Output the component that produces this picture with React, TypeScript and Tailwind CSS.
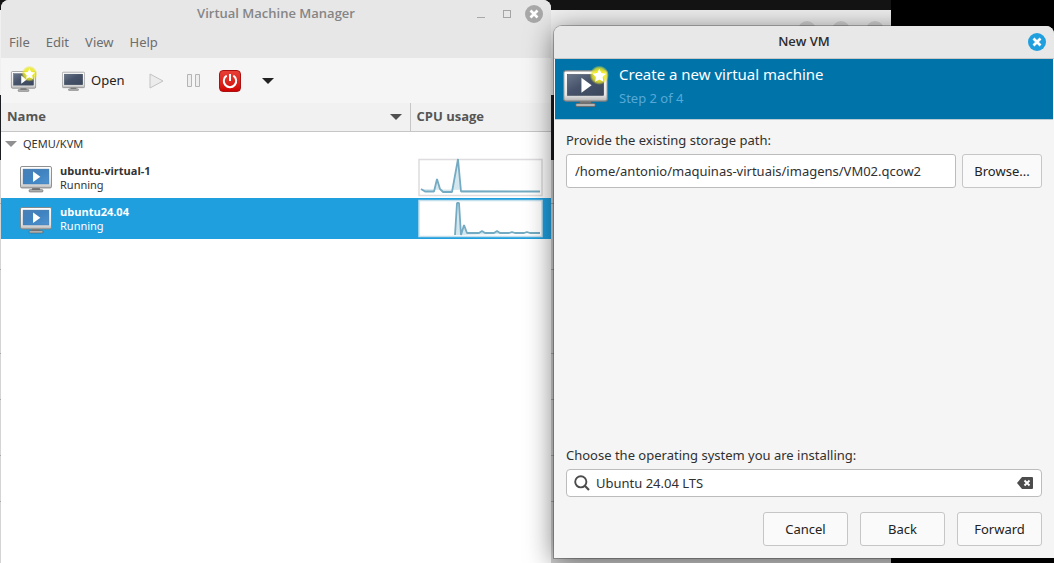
import React from "react";

function Monitor({ className, screen, play, star }: { className: string; screen: "blue" | "dark"; play?: boolean; star?: "small" | "large" }) {
  const id = React.useId();
  return (
    <svg className={className} viewBox="0 0 44 40" aria-hidden="true">
      <defs>
        <linearGradient id={id + "f"} x1="0" y1="0" x2="0" y2="1">
          <stop offset="0" stopColor="#fff" />
          <stop offset="0.8" stopColor="#e4e4e4" />
          <stop offset="1" stopColor="#b4b4b4" />
        </linearGradient>
        <linearGradient id={id + "s"} x1="0" y1="0" x2="1" y2="1">
          <stop offset="0" stopColor={screen === "blue" ? "#4a7fb5" : "#69768a"} />
          <stop offset="0.45" stopColor={screen === "blue" ? "#3f82c0" : "#46536a"} />
          <stop offset="1" stopColor={screen === "blue" ? "#4e92cf" : "#3b475b"} />
        </linearGradient>
        <radialGradient id={id + "g"}>
          <stop offset="0.4" stopColor="#f2ee1c" />
          <stop offset="0.75" stopColor="#e8e62a" stopOpacity="0.75" />
          <stop offset="1" stopColor="#e8e62a" stopOpacity="0" />
        </radialGradient>
      </defs>
      <path d="M17 33h10l1 4H16z" fill="#777" />
      <rect x="12.5" y="36" width="19" height="3.2" rx="1.2" fill="#b5b5b5" stroke="#5b5b5b" strokeWidth="0.8" />
      <rect x="0.7" y="4.2" width="42.6" height="29.5" rx="2" fill={"url(#" + id + "f)"} stroke="#808080" strokeWidth="1.2" />
      <rect x="4.200" y="7.700" width="35.600" height="20.600" fill={"url(#" + id + "s)"} stroke={screen === "blue" ? "#3c6f9f" : "#354052"} strokeWidth="0.5" />
      {play && <path d="M18 11v14.500l10-7.250z" fill="#fff" />}
      {star && (
        <g transform={star === "small" ? "translate(-20 -4.500) scale(1.480)" : undefined}>
          <circle cx="35.5" cy="8.5" r="9.500" fill={"url(#" + id + "g)"} />
          <path d="M35.500 2.200l2 4.200 4.600.6-3.400 3.200.9 4.600-4.100-2.200-4.100 2.200.9-4.600L28.900 7l4.600-.6z" fill="#fff" />
        </g>
      )}
    </svg>
  );
}

function CloseMark() {
  return (
    <svg className="size-[10px]" viewBox="0 0 10 10" aria-hidden="true">
      <path d="M1.5 1.500l7 7m0-7l-7 7" stroke="#fff" strokeWidth="2.700" />
    </svg>
  );
}

function Usage({ points, selected }: { points: string; selected: boolean }) {
  return (
    <svg className="block h-[39px] w-[125px] overflow-visible" viewBox="0 0 125 39" role="img" aria-label="CPU usage graph">
      <rect x="1" y="1.500" width="123" height="36" fill="#fff" stroke={selected ? "#c4dfec" : "#dedcde"} strokeWidth="1.500" />
      <polygon points={points} fill="#d5e7ee" />
      <polyline points={points} fill="none" stroke="#74abc2" strokeWidth="1.800" strokeLinejoin="bevel" />
    </svg>
  );
}

const machines = [
  { name: "ubuntu-virtual-1", selected: false, points: "3,31 7,33.5 16,33.5 19,21 22,31 25,34 34,34 40,1 43,33.5 122,33.5" },
  { name: "ubuntu24.04", selected: true, points: "37,36 39,4 41,4 43,36 46,26 49,34 61,34 64,32 67,34 76,34 79,32 82,34 91,34 94,33 97,34 106,34 109,33 112,34 122,34" },
];

function Manager() {
  return (
    <section className="ml-px flex min-w-0 flex-1 flex-col overflow-hidden rounded-t-lg bg-white" aria-label="Virtual Machine Manager">
      <header className="flex h-7 items-center bg-[#e7e7e7] pr-2">
        <span className="w-[74px] shrink-0" />
        <h1 className="flex-1 text-center font-['Open_Sans',sans-serif] text-[13px] font-semibold text-[#858585]">Virtual Machine Manager</h1>
        <div className="flex items-center gap-[18px]">
          <button aria-label="Minimize" className="flex h-2 w-2 items-end"><span className="h-px w-2 bg-[#a8a8a8]" /></button>
          <button aria-label="Maximize" className="size-2 border border-[#a5a5a5]" />
          <button aria-label="Close manager" className="-ml-1 flex size-[18px] items-center justify-center rounded-full bg-[#a8a8a8]"><CloseMark /></button>
        </div>
      </header>
      <nav className="flex h-[30px] items-center gap-4 bg-[#e7e7e7] px-2 text-[13px] text-[#6d6d6d]">
        <button>File</button><button>Edit</button><button>View</button><button>Help</button>
      </nav>
      <div className="flex h-[45px] items-center bg-[#f5f5f5] pl-2.5 text-[13px] text-[#222]">
        <button aria-label="New virtual machine"><Monitor className="h-[23px] w-[25px] overflow-visible" screen="dark" play star="small" /></button>
        <button className="ml-[26px] flex items-center gap-1.5"><Monitor className="h-[21px] w-[23px]" screen="dark" />Open</button>
        <button aria-label="Run" disabled className="ml-6">
          <svg className="h-4 w-[15px]" viewBox="0 0 15 16"><path d="M1 1v14l13-7z" fill="#ececec" stroke="#c2c2c2" /></svg>
        </button>
        <button aria-label="Pause" className="ml-[23px]">
          <svg className="h-[13px] w-[13px]" viewBox="0 0 13 13"><path d="M.5.500h4v12h-4zM8.500.500h4v12h-4z" fill="#eee" stroke="#b4b4b4" /></svg>
        </button>
        <button aria-label="Shut down" className="ml-[19px] flex size-[22px] items-center justify-center rounded border border-[#a91212] bg-linear-to-b from-[#e83e36] to-[#cf0000]">
          <svg className="size-4" viewBox="0 0 16 16"><path d="M4.700 2.700a6.200 6.200 0 1 0 6.600 0M8 1v7" fill="none" stroke="#fff" strokeWidth="2" /></svg>
        </button>
        <button aria-label="Shut down options" className="ml-[21px]">
          <svg className="h-1.5 w-3" viewBox="0 0 12 6"><path d="M0 0h12L6 6z" fill="#222" /></svg>
        </button>
      </div>
      <table className="w-full table-fixed border-collapse text-left">
        <colgroup><col /><col className="w-[141px]" /></colgroup>
        <thead>
          <tr className="h-7 border-b border-[#c6c6c6] bg-[#f1f1f1] font-['Open_Sans',sans-serif] text-[13px] text-[#555]">
            <th className="border-r border-[#c6c6c6] pl-1.5 pr-2 font-bold">
              <div className="flex items-center justify-between">Name
                <svg className="h-1.5 w-3" viewBox="0 0 12 6" aria-hidden="true"><path d="M0 0h12L6 6z" fill="#505050" /></svg>
              </div>
            </th>
            <th className="pl-1.5 font-bold">CPU usage</th>
          </tr>
        </thead>
        <tbody className="text-[11px] leading-[14px] text-[#333]">
          <tr className="h-[26px]">
            <td colSpan={2} className="pl-1">
              <div className="flex items-center gap-1.5">
                <svg className="h-1.5 w-3" viewBox="0 0 12 6" aria-hidden="true"><path d="M0 0h12L6 6z" fill="#909090" /></svg>QEMU/KVM
              </div>
            </td>
          </tr>
          {machines.map((m) => (
            <tr key={m.name} className={m.selected ? "h-[41px] bg-[#209fdf] text-white" : "h-[41px]"}>
              <td className="pl-[19px]">
                <div className="flex items-center gap-2">
                  <Monitor className="h-[30px] w-8" screen="blue" play />
                  <div><div className="font-['Open_Sans',sans-serif] font-bold">{m.name}</div><div>Running</div></div>
                </div>
              </td>
              <td className="pl-2"><Usage points={m.points} selected={m.selected} /></td>
            </tr>
          ))}
        </tbody>
      </table>
    </section>
  );
}

const buttonStyle = "h-[34px] rounded-[3px] border border-[#c6c6c6] bg-[#fafafa] text-[13px] text-[#222]";

function Dialog() {
  return (
    <section role="dialog" aria-label="New VM" className="z-10 mb-[5px] ml-[3px] mt-[26px] flex w-[500px] shrink-0 flex-col overflow-hidden rounded-t-lg bg-[#f5f5f5] shadow-[0_4px_28px_rgba(0,0,0,0.55),0_0_0_1px_rgba(0,0,0,0.25)]">
      <header className="flex h-[33px] items-center border-b border-[#c8c8c8] bg-[#e8e8e8] px-2">
        <span className="w-[18px]" />
        <h2 className="flex-1 text-center font-['Open_Sans',sans-serif] text-[13px] font-semibold text-[#2d2d2d]">New VM</h2>
        <button aria-label="Close dialog" className="flex size-[18px] items-center justify-center rounded-full bg-[#209fdf]"><CloseMark /></button>
      </header>
      <div className="mx-px flex h-[61px] items-start gap-[11px] border-b border-[#b9cbd5] bg-[#0073a9] px-2 pt-[5px]">
        <Monitor className="mt-0.5 h-[42px] w-[45px] overflow-visible" screen="dark" play star="large" />
        <div className="text-white">
          <h3 className="text-[15px] leading-5">Create a new virtual machine</h3>
          <p className="mt-1 text-[13px] leading-5 text-[#56a9d7]">Step 2 of 4</p>
        </div>
      </div>
      <form className="flex flex-1 flex-col px-3 pb-3 pt-2.5 text-[13px] leading-5 text-[#303030]" onSubmit={(e) => e.preventDefault()}>
        <label htmlFor="path">Provide the existing storage path:</label>
        <div className="mt-1 flex gap-1.5">
          <input id="path" defaultValue="/home/antonio/maquinas-virtuais/imagens/VM02.qcow2" className="h-[34px] min-w-0 flex-1 rounded-[3px] border border-[#bcbcbc] bg-white px-2" />
          <button type="button" className={buttonStyle + " w-20"}>Browse...</button>
        </div>
        <label htmlFor="os" className="mt-auto">Choose the operating system you are installing:</label>
        <div className="mt-1 flex h-7 items-center gap-1.5 rounded border border-[#bcbcbc] bg-white pl-[7px] pr-2">
          <svg className="size-4 shrink-0" viewBox="0 0 16 16" aria-hidden="true"><circle cx="6.800" cy="6.800" r="5.600" fill="none" stroke="#4c4c4c" strokeWidth="1.900" /><path d="M10.800 10.800l4.200 4.200" stroke="#4c4c4c" strokeWidth="2.200" /></svg>
          <input id="os" defaultValue="Ubuntu 24.04 LTS" className="min-w-0 flex-1" />
          <button type="button" aria-label="Clear">
            <svg className="h-3 w-4" viewBox="0 0 16 12"><path d="M5 0h10q1 0 1 1v10q0 1-1 1H5L0 6z" fill="#4c4c4c" /><path d="M7.500 3.500l5 5m0-5l-5 5" stroke="#fff" strokeWidth="1.900" /></svg>
          </button>
        </div>
        <div className="mt-[15px] flex justify-end gap-3">
          <button type="button" className={buttonStyle + " w-[85px]"}>Cancel</button>
          <button type="button" className={buttonStyle + " w-[85px]"}>Back</button>
          <button type="submit" className={buttonStyle + " w-[85px]"}>Forward</button>
        </div>
      </form>
    </section>
  );
}

export default function App() {
  return (
    <main className="relative isolate flex min-h-screen overflow-hidden bg-black font-['Noto_Sans',sans-serif]">
      <div className="absolute inset-y-0 left-0 -z-10 flex w-[84.5%] flex-col overflow-hidden bg-[#d4d4d4]" aria-hidden="true">
        <div className="h-2.5 shrink-0 bg-[#141414]" />
        <div className="flex h-[85px] shrink-0 items-start justify-end gap-4 bg-[#f0f0f0] pr-[7px] pt-[11px]">
          <span className="size-[18px] rounded-full bg-[#d4d4d4]" />
          <span className="size-[18px] rounded-full bg-[#d4d4d4]" />
          <span className="size-[18px] rounded-full bg-[#d4d4d4]" />
        </div>
        <div className="h-[65px] shrink-0 bg-[#1b1d20]" />
        <div className="h-11 shrink-0 border-b border-[#a8a8a8]" />
        <div className="h-[66px] shrink-0 border-b border-[#a8a8a8]" />
        <div className="h-[84px] shrink-0 border-b border-[#a8a8a8]" />
        <div className="h-[46px] shrink-0 border-b border-[#a8a8a8]" />
        <div className="h-14 shrink-0 border-b border-[#a8a8a8]" />
        <div className="h-[46px] shrink-0 border-b border-[#a8a8a8]" />
      </div>
      <Manager />
      <Dialog />
    </main>
  );
}
